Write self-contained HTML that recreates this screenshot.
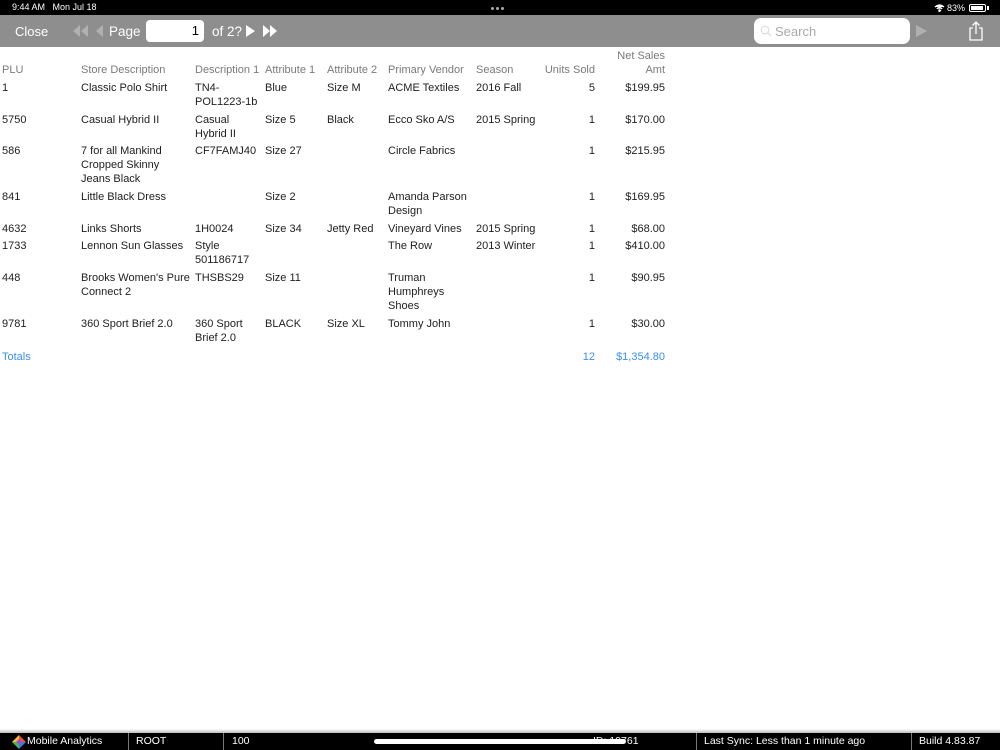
<!DOCTYPE html>
<html><head><meta charset="utf-8"><style>
*{margin:0;padding:0;box-sizing:border-box}
body{width:1000px;height:750px;background:#fff;font-family:"Liberation Sans",Arial,sans-serif;position:relative;overflow:hidden}
.t{position:absolute;left:0;top:1px;width:1000px;height:400px}
.a{position:absolute;white-space:nowrap;font-size:11px;line-height:14px;color:#1e1e1e}
.h{color:#7a7a7a}
.r{text-align:right}
.b{color:#3d8fe8}
.f{position:absolute;top:733px;height:17px;font-size:10.5px;color:#fff;line-height:17px;white-space:nowrap}
.d{position:absolute;top:733px;width:1px;height:17px;background:#777}
</style></head><body>
<div style="position:absolute;left:0;top:0;width:1000px;height:15px;background:#000"></div>
<div style="position:absolute;left:12px;top:2px;font-size:9px;color:#fff">9:44 AM&nbsp;&nbsp;&nbsp;Mon Jul 18</div>
<div style="position:absolute;left:491px;top:7px;width:18px;height:3px;font-size:0">
<span style="display:inline-block;width:3px;height:3px;border-radius:50%;background:#aaa;margin-right:2px"></span><span style="display:inline-block;width:3px;height:3px;border-radius:50%;background:#aaa;margin-right:2px"></span><span style="display:inline-block;width:3px;height:3px;border-radius:50%;background:#aaa"></span></div>
<div style="position:absolute;left:947px;top:3px;font-size:9px;color:#fff">83%</div>
<svg style="position:absolute;left:934px;top:4px" width="11" height="8" viewBox="0 0 11 8"><path d="M1 3 Q5.5 -1 10 3 M2.8 4.8 Q5.5 2.2 8.2 4.8 M4.5 6.5 L5.5 7.5 L6.5 6.5 Q5.5 5.5 4.5 6.5" stroke="#fff" stroke-width="1.3" fill="#fff"/></svg>
<div style="position:absolute;left:969px;top:4px;width:17px;height:8px;border:1px solid #fff;border-radius:2px;padding:1px"><div style="width:12px;height:4px;background:#fff"></div></div>
<div style="position:absolute;left:987px;top:6px;width:1.5px;height:4px;background:#fff"></div>

<div style="position:absolute;left:0;top:15px;width:1000px;height:32px;background:#8e8e8e"></div>
<div style="position:absolute;left:15px;top:24px;font-size:13px;color:#fff">Close</div>
<svg style="position:absolute;left:72px;top:24px" width="68" height="14" viewBox="0 0 68 14"><path d="M8 1 L1 7 L8 13Z M16 1 L9 7 L16 13Z" fill="#b0b0b0"/><path d="M31 1 L24 7 L31 13Z" fill="#b0b0b0"/></svg>
<div style="position:absolute;left:109px;top:24px;font-size:13.5px;color:#fff">Page</div>
<div style="position:absolute;left:146px;top:20px;width:58px;height:22px;background:#fff;border-radius:4px;font-size:13px;text-align:right;padding-right:5px;line-height:22px">1</div>
<div style="position:absolute;left:212px;top:24px;font-size:13.5px;color:#fff">of 2?</div>
<svg style="position:absolute;left:245px;top:24px" width="36" height="14" viewBox="0 0 36 14"><path d="M1 1 L10 7 L1 13Z M18 1 L25 7 L18 13Z M25 1 L32 7 L25 13Z" fill="#fff"/></svg>
<div style="position:absolute;left:754px;top:18px;width:156px;height:26px;background:#fff;border-radius:7px"></div>
<svg style="position:absolute;left:760px;top:25px" width="12" height="12" viewBox="0 0 12 12"><circle cx="5" cy="5" r="3.8" stroke="#ddd" stroke-width="1.2" fill="none"/><path d="M8 8 L11 11" stroke="#ddd" stroke-width="1.4"/></svg>
<div style="position:absolute;left:775px;top:24px;font-size:13px;color:#aaa">Search</div>
<svg style="position:absolute;left:915px;top:24px" width="14" height="14" viewBox="0 0 14 14"><path d="M1 1 L12 7 L1 13Z" fill="#b0b0b0"/></svg>
<svg style="position:absolute;left:967px;top:20px" width="18" height="22" viewBox="0 0 18 22"><path d="M6 8 H3 V20 H15 V8 H12 M9 14 V2 M5.5 5.5 L9 2 L12.5 5.5" stroke="#fff" stroke-width="1.3" fill="none"/></svg>

<div class="t">
<div class="a h r" style="right:335px;top:48px">Net Sales</div>
<div class="a h" style="left:2px;top:62px">PLU</div>
<div class="a h" style="left:81px;top:62px">Store Description</div>
<div class="a h" style="left:195px;top:62px">Description 1</div>
<div class="a h" style="left:265px;top:62px">Attribute 1</div>
<div class="a h" style="left:327px;top:62px">Attribute 2</div>
<div class="a h" style="left:388px;top:62px">Primary Vendor</div>
<div class="a h" style="left:476px;top:62px">Season</div>
<div class="a h r" style="right:405px;top:62px">Units Sold</div>
<div class="a h r" style="right:335px;top:62px">Amt</div>

<div class="a" style="left:2px;top:80px">1</div><div class="a" style="left:81px;top:80px">Classic Polo Shirt</div><div class="a" style="left:195px;top:80px">TN4-<br>POL1223-1b</div><div class="a" style="left:265px;top:80px">Blue</div><div class="a" style="left:327px;top:80px">Size M</div><div class="a" style="left:388px;top:80px">ACME Textiles</div><div class="a" style="left:476px;top:80px">2016 Fall</div><div class="a r" style="right:405px;top:80px">5</div><div class="a r" style="right:335px;top:80px">$199.95</div>

<div class="a" style="left:2px;top:112px">5750</div><div class="a" style="left:81px;top:112px">Casual Hybrid II</div><div class="a" style="left:195px;top:112px">Casual<br>Hybrid II</div><div class="a" style="left:265px;top:112px">Size 5</div><div class="a" style="left:327px;top:112px">Black</div><div class="a" style="left:388px;top:112px">Ecco Sko A/S</div><div class="a" style="left:476px;top:112px">2015 Spring</div><div class="a r" style="right:405px;top:112px">1</div><div class="a r" style="right:335px;top:112px">$170.00</div>

<div class="a" style="left:2px;top:143px">586</div><div class="a" style="left:81px;top:143px">7 for all Mankind<br>Cropped Skinny<br>Jeans Black</div><div class="a" style="left:195px;top:143px">CF7FAMJ40</div><div class="a" style="left:265px;top:143px">Size 27</div><div class="a" style="left:388px;top:143px">Circle Fabrics</div><div class="a r" style="right:405px;top:143px">1</div><div class="a r" style="right:335px;top:143px">$215.95</div>

<div class="a" style="left:2px;top:189px">841</div><div class="a" style="left:81px;top:189px">Little Black Dress</div><div class="a" style="left:265px;top:189px">Size 2</div><div class="a" style="left:388px;top:189px">Amanda Parson<br>Design</div><div class="a r" style="right:405px;top:189px">1</div><div class="a r" style="right:335px;top:189px">$169.95</div>

<div class="a" style="left:2px;top:221px">4632</div><div class="a" style="left:81px;top:221px">Links Shorts</div><div class="a" style="left:195px;top:221px">1H0024</div><div class="a" style="left:265px;top:221px">Size 34</div><div class="a" style="left:327px;top:221px">Jetty Red</div><div class="a" style="left:388px;top:221px">Vineyard Vines</div><div class="a" style="left:476px;top:221px">2015 Spring</div><div class="a r" style="right:405px;top:221px">1</div><div class="a r" style="right:335px;top:221px">$68.00</div>

<div class="a" style="left:2px;top:238px">1733</div><div class="a" style="left:81px;top:238px">Lennon Sun Glasses</div><div class="a" style="left:195px;top:238px">Style<br>501186717</div><div class="a" style="left:388px;top:238px">The Row</div><div class="a" style="left:476px;top:238px">2013 Winter</div><div class="a r" style="right:405px;top:238px">1</div><div class="a r" style="right:335px;top:238px">$410.00</div>

<div class="a" style="left:2px;top:270px">448</div><div class="a" style="left:81px;top:270px">Brooks Women's Pure<br>Connect 2</div><div class="a" style="left:195px;top:270px">THSBS29</div><div class="a" style="left:265px;top:270px">Size 11</div><div class="a" style="left:388px;top:270px">Truman<br>Humphreys<br>Shoes</div><div class="a r" style="right:405px;top:270px">1</div><div class="a r" style="right:335px;top:270px">$90.95</div>

<div class="a" style="left:2px;top:316px">9781</div><div class="a" style="left:81px;top:316px">360 Sport Brief 2.0</div><div class="a" style="left:195px;top:316px">360 Sport<br>Brief 2.0</div><div class="a" style="left:265px;top:316px">BLACK</div><div class="a" style="left:327px;top:316px">Size XL</div><div class="a" style="left:388px;top:316px">Tommy John</div><div class="a r" style="right:405px;top:316px">1</div><div class="a r" style="right:335px;top:316px">$30.00</div>

<div class="a b" style="left:2px;top:349px">Totals</div><div class="a b r" style="right:405px;top:349px">12</div><div class="a b r" style="right:335px;top:349px">$1,354.80</div>
</div>

<div style="position:absolute;left:0;top:729px;width:1000px;height:4px;background:linear-gradient(#fff,#bbb)"></div>
<div style="position:absolute;left:0;top:733px;width:1000px;height:17px;background:#000"></div>
<svg style="position:absolute;left:12px;top:735px" width="14" height="14" viewBox="0 0 14 14"><path d="M7 0 L14 7 L7 7Z" fill="#e8503a"/><path d="M14 7 L7 14 L7 7Z" fill="#3a7be8"/><path d="M7 14 L0 7 L7 7Z" fill="#4bb84b"/><path d="M0 7 L7 0 L7 7Z" fill="#f0c030"/><path d="M4 7 L7 4 L10 7 L7 10Z" fill="#9a4ed0"/></svg>
<div class="f" style="left:27px">Mobile Analytics</div>
<div class="d" style="left:128px"></div>
<div class="f" style="left:136px">ROOT</div>
<div class="d" style="left:223px"></div>
<div class="f" style="left:232px">100</div>
<div class="f" style="left:593px">ID: 10761</div>
<div class="d" style="left:696px"></div>
<div class="f" style="left:704px">Last Sync: Less than 1 minute ago</div>
<div class="d" style="left:911px"></div>
<div class="f" style="left:919px">Build 4.83.87</div>
<div style="position:absolute;left:374px;top:739px;width:252px;height:5px;border-radius:3px;background:#fff"></div>
</body></html>
